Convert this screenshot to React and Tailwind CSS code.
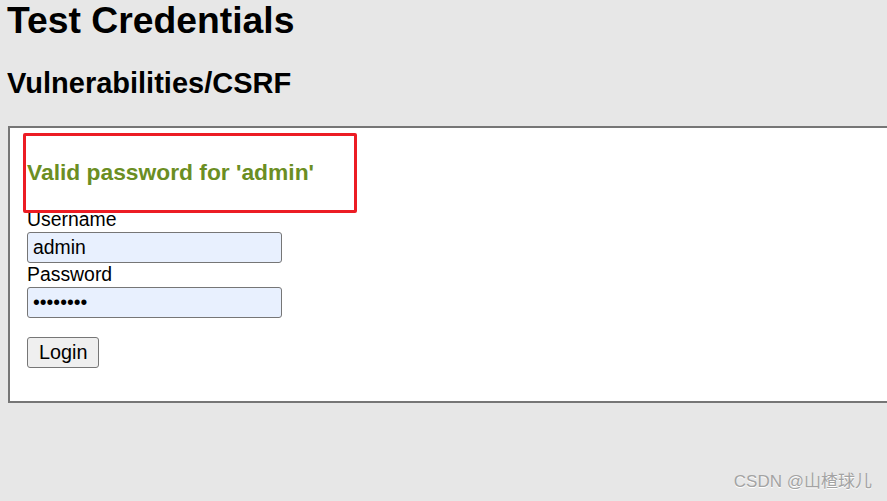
import React from 'react';

export default function App() {
  return (
    <div className="relative w-[887px] h-[501px] overflow-hidden bg-[#e7e7e7] text-black font-['Liberation_Sans',Arial,sans-serif]">
      <h1 className="pl-[7px] text-[37.3px] leading-[41px] font-bold">Test Credentials</h1>
      <h2 className="mt-[24px] pl-[7px] text-[29px] leading-[36px] font-bold">Vulnerabilities/CSRF</h2>

      <div className="mt-[25px] ml-[8px] w-[900px] h-[277px] box-border border-2 border-[#767676] bg-white pl-[17px] pt-[31px]">
        <p className="text-[22.8px] leading-[26px] font-bold text-[#6b8e23]">Valid password for 'admin'</p>

        <form className="mt-[23px] flex flex-col items-start" onSubmit={(e) => e.preventDefault()}>
          <label className="text-[19.4px] leading-[22px]">Username</label>
          <input
            type="text"
            readOnly
            value="admin"
            className="mt-[2px] w-[255px] h-[31px] box-border border border-[#767676] rounded-[3px] bg-[#e8f0fe] px-[5px] text-[19.4px] outline-none"
          />
          <label className="text-[19.4px] leading-[22px]">Password</label>
          <input
            type="text"
            readOnly
            value="••••••••"
            className="mt-[2px] w-[255px] h-[31px] box-border border border-[#767676] rounded-[3px] bg-[#e8f0fe] px-[5px] text-[19.4px] outline-none"
          />
          <button
            type="submit"
            className="mt-[19px] h-[31px] box-border border border-[#767676] rounded-[3px] bg-[#efefef] px-[11px] text-[19.8px] leading-none"
          >
            Login
          </button>
        </form>
      </div>

      {/* annotation box over the message */}
      <div className="absolute left-[23px] top-[133px] w-[334px] h-[80px] box-border border-[3px] border-[#ec1c24] rounded-[2px]" />

      <div className="absolute right-[15px] bottom-[9px] text-[17px] leading-[20px] text-[#a3a3a3] [text-shadow:0_1px_0_#ffffff] font-['Liberation_Sans','Noto_Sans_CJK_SC',sans-serif]">
        CSDN @山楂球儿
      </div>
    </div>
  );
}
